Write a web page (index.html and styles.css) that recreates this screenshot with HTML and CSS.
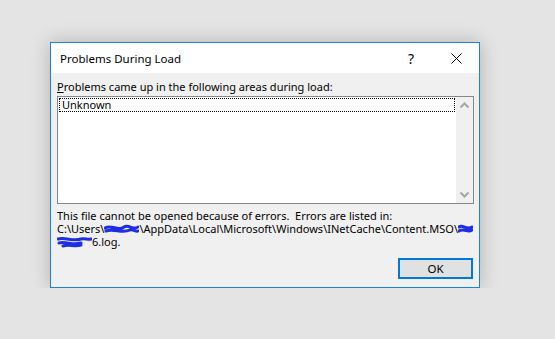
FILE: index.html
```html
<!DOCTYPE html>
<html lang="en">
<head>
    <meta charset="UTF-8">
    <meta name="viewport" content="width=device-width, initial-scale=1.0">
    <title>Problems During Load</title>
    <link rel="stylesheet" href="styles.css">
</head>
<body>
    <div class="dialog">
        <div class="title-bar">
            <span class="title">Problems During Load</span>
            <span class="help">?</span>
            <span class="close">
                <svg width="11" height="11" viewBox="0 0 11 11">
                    <path d="M0.5 0.5 L10.5 10.5 M10.5 0.5 L0.5 10.5" stroke="#000" stroke-width="1" fill="none"/>
                </svg>
            </span>
        </div>
        <div class="content">
            <label class="list-label"><u>P</u>roblems came up in the following areas during load:</label>
            <div class="listbox">
                <div class="items">
                    <div class="item">Unknown</div>
                </div>
                <div class="scrollbar">
                    <svg width="17" height="17" viewBox="0 0 17 17">
                        <path d="M4.5 10.5 L8.5 6.5 L12.5 10.5" stroke="#a6a6a6" stroke-width="2" fill="none"/>
                    </svg>
                    <svg width="17" height="17" viewBox="0 0 17 17">
                        <path d="M4.5 6.5 L8.5 10.5 L12.5 6.5" stroke="#a6a6a6" stroke-width="2" fill="none"/>
                    </svg>
                </div>
            </div>
            <p class="message">
                This file cannot be opened because of errors.&nbsp; Errors are listed in:<br>
                C:\Users\<span class="redact"><svg width="35" height="12" viewBox="0 0 35 12"><path d="M1 5 C8 1 14 9 20 4 C25 1 30 8 34 4 M2 8 C10 5 18 11 26 7 C29 6 32 9 34 8" stroke="#1f2fe0" stroke-width="3" fill="none" stroke-linecap="round"/></svg></span>\AppData\Local\Microsoft\Windows\INetCache\Content.MSO\<span class="redact"><svg width="15" height="12" viewBox="0 0 15 12"><path d="M1 4 C5 1 9 8 14 4 M1 8 C6 5 10 10 14 7" stroke="#1f2fe0" stroke-width="3" fill="none" stroke-linecap="round"/></svg></span><br>
                <span class="redact"><svg width="35" height="12" viewBox="0 0 35 12"><path d="M1 3 C9 1 16 6 24 3 C28 2 31 4 34 3 M2 7 C9 5 16 10 24 7 M6 10 C12 8 18 11 24 9" stroke="#1f2fe0" stroke-width="3" fill="none" stroke-linecap="round"/></svg></span>6.log.
            </p>
            <div class="actions">
                <button type="button" class="ok-button">OK</button>
            </div>
        </div>
    </div>
</body>
</html>
```

FILE: styles.css
```css
body {
    margin: 0;
    padding: 42px 0 0 50px;
    background-color: #e4e4e4;
    font-family: "Noto Sans", Arial, sans-serif;
    font-size: 11px;
    color: #000;
}
.dialog {
    width: 428px;
    height: 244px;
    border: 1px solid #1883d7;
    background-color: #f0f0f0;
    box-shadow: 0 0 18px rgba(0,0,0,0.22);
    display: flex;
    flex-direction: column;
}
.title-bar {
    height: 30px;
    background-color: #fff;
    display: flex;
    align-items: center;
    padding-left: 9px;
}
.title {
    flex: 1;
    font-size: 11.5px;
    margin-top: 1px;
}
.help {
    font-size: 14px;
    width: 14px;
    margin-right: 29px;
}
.close {
    display: flex;
    margin-right: 17px;
}
.content {
    flex: 1;
    padding: 6px 5px 8px 6px;
    display: flex;
    flex-direction: column;
}
.list-label {
    display: block;
    height: 15px;
    line-height: 15px;
    margin-bottom: 2px;
}
.list-label u {
    text-decoration-thickness: 1px;
    text-underline-offset: 1px;
}
.listbox {
    width: 415px;
    height: 106px;
    border: 1px solid #828790;
    background-color: #fff;
    display: flex;
}
.items {
    flex: 1;
    padding: 1px 1px 0 1px;
}
.item {
    height: 12px;
    line-height: 12px;
    padding-left: 2px;
    border: 1px dotted #000;
}
.scrollbar {
    width: 17px;
    background-color: #f0f0f0;
    display: flex;
    flex-direction: column;
    justify-content: space-between;
}
.message {
    margin: 5px 0 0 0;
    line-height: 13px;
    white-space: nowrap;
}
.redact {
    display: inline-block;
    vertical-align: -2px;
}
.redact svg {
    display: block;
}
.actions {
    flex: 1;
    display: flex;
    justify-content: flex-end;
    align-items: flex-end;
}
.ok-button {
    width: 75px;
    height: 21px;
    border: 2px solid #0078d7;
    background-color: #e1e1e1;
    font-family: "Noto Sans", Arial, sans-serif;
    font-size: 11.5px;
    padding: 0;
    margin-right: 1px;
}
```
